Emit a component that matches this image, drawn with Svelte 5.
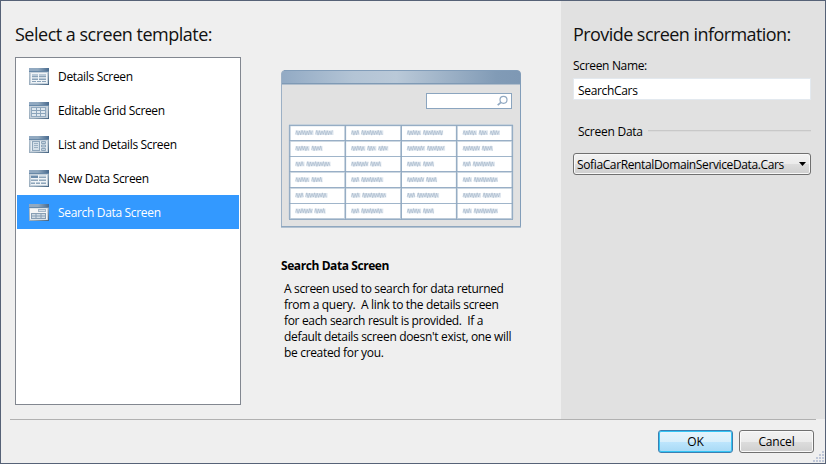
<script>
  const templates = [
    { name: 'Details Screen', kind: 'details' },
    { name: 'Editable Grid Screen', kind: 'grid' },
    { name: 'List and Details Screen', kind: 'list' },
    { name: 'New Data Screen', kind: 'new' },
    { name: 'Search Data Screen', kind: 'search' }
  ];
  let selected = $state('search');
  let screenName = $state('SearchCars');

  const description = [
    'A screen used to search for data returned',
    'from a query.\u00a0 A link to the details screen',
    'for each search result is provided.\u00a0 If a',
    "default details screen doesn't exist, one will",
    'be created for you.'
  ];

  // Word lengths of the scribbled sample values in the preview grid
  const words = {
    A: [18, 18], B: [8, 22], C: [14, 11], D: [14, 9, 10],
    E: [9, 24], F: [17, 11], G: [14, 20]
  };
  const rows = ['ABGD', 'CDAF', 'EFCB', 'CBFE', 'BEBA', 'FBCE'];
  const scribbles = rows.flatMap((row, r) =>
    [...row].flatMap((key, c) => {
      let x = 295.5 + c * 55.8;
      const y = 132.7 + r * 15.65;
      return words[key].map((w, i) => {
        const start = x;
        x += w + 2;
        let d = `M${start} ${y + 1.6}`;
        for (let k = 1; k * 1.3 <= w; k++) {
          const up = k % 2 === 1;
          d += `L${start + k * 1.3} ${y + (up ? -1.7 - ((k + i) % 3) * 0.4 : 1.7 + (k % 3) * 0.4)}`;
        }
        return { d, x: start, y, w };
      });
    })
  );
</script>

<div class="window">
  <main>
    <section class="picker">
      <h1 class="left-title">Select a screen template:</h1>
      <div class="columns">
        <div class="list" role="listbox">
          {#each templates as t}
            <button class="row" class:selected={selected === t.kind} onclick={() => (selected = t.kind)}>
              <svg width="20" height="17" viewBox="0 0 20 17">
                <defs>
                  <linearGradient id="bar" x1="0" x2="1" y1="0" y2="0">
                    <stop offset="0" stop-color="#91a9c2" /><stop offset=".45" stop-color="#91a9bf" /><stop offset="1" stop-color="#486a8e" />
                  </linearGradient>
                  <linearGradient id="frame" x1="0" x2="1" y1="0" y2="1">
                    <stop offset="0" stop-color="#b7c5d2" /><stop offset=".6" stop-color="#94a8b9" /><stop offset="1" stop-color="#42617f" />
                  </linearGradient>
                </defs>
                <rect width="20" height="17" fill="url(#frame)" />
                <rect width="20" height="4" fill="url(#bar)" />
                <path d="M0 3.5H20" stroke="#6788a7" />
                <rect x="1" y="4" width="18" height="12" fill="#c4d0db" />
                {#if t.kind === 'details'}
                  <rect x="2" y="5" width="16" height="10" fill="#f0f4f7" />
                  <path d="M3 6h6v2H3zM10 6h7v2h-7zM3 9.500h6v2H3zM10 9.500h7v2h-7z" fill="#b9c9d7" />
                  <path d="M3 8.500h6M10 8.500h7M3 11.500h6M10 11.500h7M3 13.500h4M8 13.500h4M13 13.500h4" stroke="#8aa2b8" />
                {:else if t.kind === 'grid'}
                  <rect x="2.500" y="5.500" width="14" height="9" fill="#dfe8ef" stroke="#91a9bf" />
                  <path d="M2.500 8.500h14M2.500 11.500h14M7.500 5.500v9M11.500 5.500v9" stroke="#8ba4bb" />
                {:else if t.kind === 'list'}
                  <rect x="2" y="5" width="16" height="10" fill="#e6edf2" />
                  <rect x="3.500" y="5.500" width="7" height="9" fill="#d5e0e9" stroke="#8fa6bb" />
                  <path d="M5 7.500h4M5 9.500h4M5 11.500h4" stroke="#9db1c3" />
                  <path d="M12.500 5.500h4v2h-4zM12.500 9h4v2h-4zM12.500 12.500h4v2h-4z" fill="#c6d4e0" stroke="#8fa6bb" />
                {:else if t.kind === 'new'}
                  <rect x="2" y="5" width="16" height="10" fill="#f0f4f7" />
                  <path d="M2 5.500h7V8H2z" fill="#6c8cab" />
                  <path d="M10 5.500h7V8h-7zM2 9h7v2H2zM10 9h7v2h-7zM2 12h4v2H2zM7 12h4v2H7zM12 12h5v2h-5z" fill="#bccbd8" />
                  <path d="M10 7.500h7M2 10.500h7M10 10.500h7M2 13.500h4M7 13.500h4M12 13.500h5" stroke="#8fa6bb" />
                {:else}
                  <rect x="1" y="4.500" width="17" height="11" fill="#f4f5f6" />
                  <rect x="9.500" y="5.500" width="7" height="2" fill="#d6dfe7" stroke="#a4b6c7" />
                  <rect x="2" y="9" width="15" height="6" fill="#879eb4" />
                  <path d="M3 10h3.500v1.500H3zM7.500 10h4v1.500h-4zM12.500 10h3.500v1.500h-3.500zM3 12.500h3.500V14H3zM7.500 12.500h4V14h-4zM12.500 12.500h3.500V14h-3.500z" fill="#cfdbe5" />
                {/if}
              </svg>
              <span>{t.name}</span>
            </button>
          {/each}
        </div>

        <div class="detail">
          <svg class="preview" width="244" height="162" viewBox="279 68 244 162">
            <defs>
              <linearGradient id="title" x1="0" x2="1" y1="0" y2="0">
                <stop offset="0" stop-color="#92aac4" /><stop offset=".3" stop-color="#b3c4d5" />
                <stop offset=".48" stop-color="#bac9d8" /><stop offset=".9" stop-color="#819bb6" /><stop offset="1" stop-color="#7e98b4" />
              </linearGradient>
            </defs>
            <path d="M281.500 227.500V74q0-3.500 3.500-3.500h232q3.500 0 3.500 3.500v153.500z" fill="#e1e1e1" />
            <path d="M281.500 84V74q0-3.500 3.500-3.500h232q3.500 0 3.500 3.500v10z" fill="url(#title)" />
            <path d="M281.500 83.500h239" stroke="#7f9ab5" />
            <path d="M281.500 84.500h239" stroke="#b2bfcd" />
            <path d="M281.500 227V74q0-3.500 3.500-3.500" fill="none" stroke="#9cb0c5" />
            <path d="M284 70.500h233q3.500 0 3.500 3.500v153" fill="none" stroke="#829db9" />
            <path d="M281 226.500h240" stroke="#8fa7bf" />
            <path d="M281 227.500h240" stroke="#b3c2d1" />
            <rect x="426.500" y="93.500" width="85" height="15" fill="#fff" stroke="#8ba5bf" />
            <circle cx="503.500" cy="99.800" r="3.500" fill="#fff" stroke="#91a9c2" stroke-width="1.200" />
            <path d="M501 102.300l-3.300 2.800" stroke="#91a9c2" stroke-width="1.700" />
            <rect x="289.500" y="125.500" width="223" height="93.500" fill="#fff" />
            <g stroke="#bdcbd9" stroke-width="2">
              <path d="M289 125.300h224M289 219h224M289.700 125v94M345.200 125v94M401 125v94M456.800 125v94M512.300 125v94" />
              <path d="M289 141h224M289 172h224M289 188h224" stroke-width="1.500" />
            </g>
            <path d="M289 125.500h224M289 140.500h224M289 156.500h224M289 171.500h224M289 187.500h224M289 203.500h224M289 219.500h224M289.500 125v95M345.500 125v95M401.500 125v95M456.500 125v95M512.500 125v95" stroke="#8fa8c1" stroke-width=".85" />
            {#each scribbles as s}
              <rect x={s.x} y={s.y - 2.3} width={s.w} height="4.600" fill="#c1cfde" opacity=".55" />
              <path d={s.d} fill="none" stroke="#8fa5be" stroke-width=".5" opacity=".85" />
            {/each}
          </svg>
          <h2>Search Data Screen</h2>
          <div class="description">
            {#each description as line}<div>{line}</div>{/each}
          </div>
        </div>
      </div>
    </section>

    <section class="info">
      <h1 class="right-title">Provide screen information:</h1>
      <label for="name">Screen Name:</label>
      <input id="name" bind:value={screenName} />
      <div class="group"><span>Screen Data</span><i></i></div>
      <button class="combo">
        <span>SofiaCarRentalDomainServiceData.Cars</span>
        <svg width="7" height="4" viewBox="0 0 7 4"><path d="M0 0h7L3.500 4z" fill="#000" /></svg>
      </button>
    </section>
  </main>

  <footer>
    <div class="rule"></div>
    <div class="actions">
      <button class="push ok">OK</button>
      <button class="push cancel">Cancel</button>
    </div>
    <svg class="grip" width="12" height="12" viewBox="0 0 12 12">
      <path d="M9 0h2v2H9zM6 3h2v2H6zM9 3h2v2H9zM3 6h2v2H3zM6 6h2v2H6zM9 6h2v2H9zM0 9h2v2H0zM3 9h2v2H3zM6 9h2v2H6zM9 9h2v2H9z" fill="#bfc7d8" />
    </svg>
  </footer>
</div>

<style>
  .window {
    box-sizing: border-box;
    width: 826px;
    height: 464px;
    border: 1px solid #566277;
    background: #efefef;
    color: #000;
    display: flex;
    flex-direction: column;
    position: relative;
    font: 12px/16px "Open Sans", "Noto Sans", sans-serif;
    letter-spacing: -0.33px;
  }
  main { display: flex; height: 418px; }
  h1 {
    margin: 0;
    font-size: 18px;
    font-weight: 400;
    line-height: 24px;
    white-space: nowrap;
    color: #111;
  }
  .left-title { letter-spacing: -0.5px; }
  .right-title { letter-spacing: -0.56px; }
  button, input { font: inherit; letter-spacing: inherit; color: inherit; box-sizing: border-box; }
  .picker { width: 560px; box-sizing: border-box; padding: 21px 0 0 14px; }
  .columns { display: flex; margin-top: 11px; }
  .list {
    box-sizing: border-box;
    width: 226px;
    height: 348px;
    border: 1px solid #828790;
    background: #fff;
    padding: 1px;
  }
  .row {
    display: flex;
    align-items: center;
    gap: 9px;
    width: 100%;
    height: 34px;
    padding: 0 0 0 12px;
    border: 0;
    background: none;
    text-align: left;
    white-space: nowrap;
  }
  .row span { padding-top: 1px; }
  .row.selected { background: #3399ff; color: #fff; }
  .detail { padding: 11px 0 0 38px; }
  .preview { display: block; }
  h2 { margin: 28px 0 0 2px; font-size: 12px; line-height: 16px; font-weight: 700; letter-spacing: -0.42px; }
  .description { margin: 7px 0 0 5px; white-space: nowrap; }
  .info { width: 264px; box-sizing: border-box; background: #e1e1e1; padding: 21px 14px 0 12px; }
  label { display: block; margin-top: 12px; }
  input {
    display: block;
    width: 238px;
    height: 22px;
    margin-top: 4px;
    padding: 2px 4px 0;
    border: 1px solid #e3e9ef;
    background: #fff;
    outline: 0;
  }
  .group { display: flex; align-items: center; gap: 5px; margin: 24px 0 0 5px; letter-spacing: -0.25px; }
  .group i { flex: 1; height: 1px; margin-top: -2px; background: #c8c8c8; border-bottom: 1px solid #dadada; }
  .combo {
    display: flex;
    align-items: center;
    justify-content: space-between;
    width: 238px;
    height: 22px;
    margin-top: 13px;
    padding: 0 4px 0 3px;
    border: 1px solid #707070;
    border-radius: 3px;
    box-shadow: inset 0 0 0 1px #f8f8f8;
    background: linear-gradient(#f2f2f2, #ebebeb 50%, #dddddd 50%, #cfcfcf);
    letter-spacing: -0.37px;
  }
  .combo span { padding-top: 1px; }
  footer { height: 44px; }
  .rule { height: 1px; margin: 0 9px; background: #b1b1b1; }
  .actions { display: flex; justify-content: flex-end; gap: 6px; padding: 10px 11px 0 0; letter-spacing: -0.15px; }
  .push {
    width: 75px;
    height: 23px;
    padding: 0;
    border: 1px solid #707070;
    border-radius: 3px;
    background: linear-gradient(#f2f2f2, #ebebeb 50%, #dddddd 50%, #cfcfcf);
    box-shadow: inset 0 0 0 1px #fafafa;
  }
  .ok {
    border-color: #3c7fb1;
    background: linear-gradient(#e6f4fc, #d8effb 50%, #bee6fd 50%, #a7d9f5);
    box-shadow: inset 0 0 0 1px #34c5f5;
  }
  .grip { position: absolute; right: 0; bottom: 0; }
</style>
